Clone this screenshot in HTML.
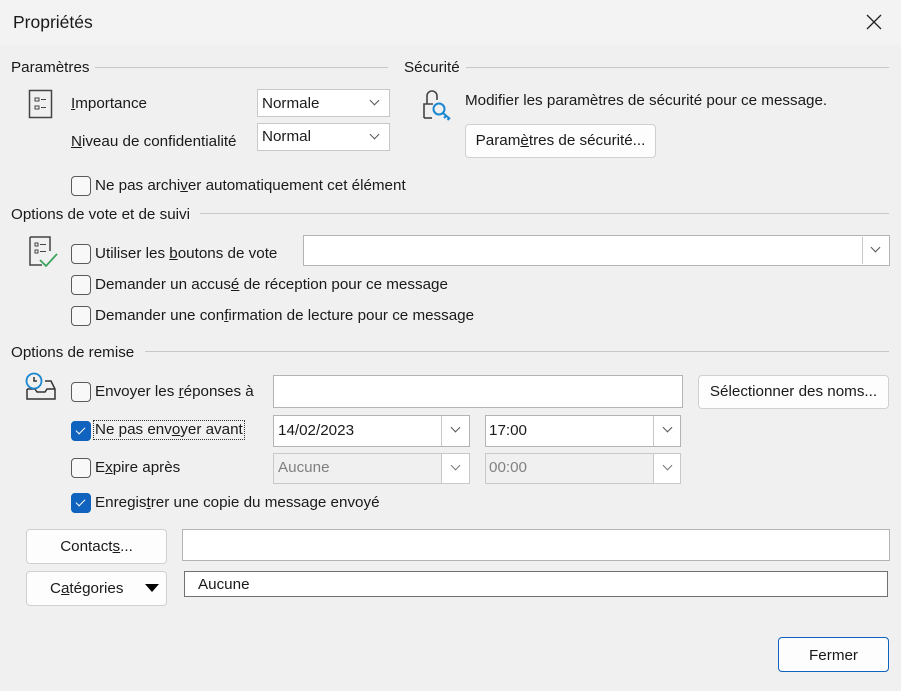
<!DOCTYPE html>
<html><head><meta charset="utf-8"><style>
*{box-sizing:border-box;margin:0;padding:0}
body{width:901px;height:691px;background:#f0f0f0;font-family:"Liberation Sans",sans-serif;font-size:15.2px;color:#1a1a1a;position:relative;overflow:hidden}
.a{position:absolute;white-space:nowrap}
.t{position:absolute;white-space:nowrap;line-height:18px}
.ln{position:absolute;height:1px;background:#c8c8c8}
.cb{position:absolute;width:20px;height:20px;border:1px solid #5a5a5a;border-radius:4px;background:#f8f8f8}
.cb.on{background:#0f62be;border-color:#0f62be}
.cb.on:after{content:"";position:absolute;left:6px;top:3px;width:4px;height:8px;border:solid #fff;border-width:0 1.5px 1.5px 0;transform:rotate(45deg)}
.box{position:absolute;background:#fff;border:1px solid #b4b4b4}
.btn{position:absolute;background:#fdfdfd;border:1px solid #d0d0d0;border-radius:4px;text-align:center}
.chev{position:absolute;width:7px;height:7px;border:solid #555;border-width:0 1px 1px 0;transform:rotate(45deg)}
.dd{position:absolute;background:#fff;border:1px solid #c8c8c8}
u{text-decoration:underline}
</style></head><body>
<div class="a" style="left:0;top:0;width:901px;height:45px;background:#f3f3f3"></div>
<div class="t" style="left:13px;top:12px;font-size:17.5px;line-height:20px">Propriétés</div>
<svg class="a" style="left:866px;top:14px" width="16" height="16"><path d="M1 1L15 15M15 1L1 15" stroke="#222" stroke-width="1.3"/></svg>

<div class="t" style="left:11px;top:59px">Paramètres</div>
<div class="ln" style="left:95px;top:67px;width:293px"></div>
<div class="t" style="left:404px;top:59px">Sécurité</div>
<div class="ln" style="left:466px;top:67px;width:423px"></div>

<svg class="a" style="left:28px;top:89px" width="26" height="30"><rect x="1.5" y="1.5" width="22" height="27" fill="none" stroke="#444" stroke-width="1.5"/><rect x="7" y="9" width="4" height="3" fill="none" stroke="#444"/><rect x="7" y="17" width="4" height="3" fill="none" stroke="#444"/><path d="M13 10.5h5M13 18.5h5" stroke="#444"/></svg>
<div class="t" style="left:71px;top:95px"><u>I</u>mportance</div>
<div class="t" style="left:71px;top:133px"><u>N</u>iveau de confidentialité</div>
<div class="dd" style="left:257px;top:89px;width:133px;height:28px"><span class="t" style="left:4px;top:5px">Normale</span><span class="chev" style="left:113px;top:7px"></span></div>
<div class="dd" style="left:257px;top:123px;width:133px;height:28px"><span class="t" style="left:4px;top:4px">Normal</span><span class="chev" style="left:113px;top:7px"></span></div>

<svg class="a" style="left:421px;top:88px" width="32" height="34"><path d="M3 30V16h9M6 16V8a5 5 0 0 1 10 0v4" fill="none" stroke="#444" stroke-width="1.6"/><path d="M3 30h8" stroke="#444" stroke-width="1.6"/><circle cx="18" cy="21" r="5.5" fill="none" stroke="#1a86d0" stroke-width="2"/><path d="M22 25l7 6M25 28l-2 2M28 30.5l-1.5 1.5" stroke="#1a86d0" stroke-width="2" fill="none"/></svg>
<div class="t" style="left:465px;top:92px">Modifier les paramètres de sécurité pour ce message.</div>
<div class="btn" style="left:465px;top:124px;width:191px;height:34px;line-height:32px">Param<u>è</u>tres de sécurité...</div>

<div class="cb" style="left:71px;top:176px"></div>
<div class="t" style="left:95px;top:177px">Ne pas archi<u>v</u>er automatiquement cet élément</div>

<div class="t" style="left:11px;top:206px">Options de vote et de suivi</div>
<div class="ln" style="left:200px;top:213px;width:689px"></div>
<svg class="a" style="left:28px;top:235px" width="32" height="34"><path d="M2 2h20v14M2 2v28h12" fill="none" stroke="#444" stroke-width="1.5"/><rect x="7" y="8" width="3" height="3" fill="none" stroke="#444"/><rect x="7" y="15" width="3" height="3" fill="none" stroke="#444"/><path d="M12 9.5h6M12 16.5h6" stroke="#444"/><path d="M12 25l6 6 11-12" fill="none" stroke="#3aa35a" stroke-width="1.8"/></svg>
<div class="cb" style="left:71px;top:244px"></div>
<div class="t" style="left:95px;top:245px">Utiliser les <u>b</u>outons de vote</div>
<div class="box" style="left:303px;top:235px;width:587px;height:31px"></div>
<div class="a" style="left:862px;top:237px;width:26px;height:27px;border-left:1px solid #c8c8c8;background:#fff"><span class="chev" style="left:9px;top:7px"></span></div>
<div class="cb" style="left:71px;top:275px"></div>
<div class="t" style="left:95px;top:276px">Demander un accus<u>é</u> de réception pour ce message</div>
<div class="cb" style="left:71px;top:306px"></div>
<div class="t" style="left:95px;top:307px">Demander une con<u>f</u>irmation de lecture pour ce message</div>

<div class="t" style="left:11px;top:344px">Options de remise</div>
<div class="ln" style="left:145px;top:351px;width:744px"></div>
<svg class="a" style="left:24px;top:372px" width="34" height="30"><path d="M3 17v10h28V17l-4-8h-6M3 17h8l2 3h8l2-3h8" fill="none" stroke="#333" stroke-width="1.5"/><circle cx="10" cy="9" r="7.5" fill="#f0f0f0" stroke="#1a86d0" stroke-width="1.8"/><path d="M10 5v4h3" fill="none" stroke="#333" stroke-width="1.5"/></svg>
<div class="cb" style="left:71px;top:382px"></div>
<div class="t" style="left:95px;top:383px">Envoyer les <u>r</u>éponses à</div>
<div class="box" style="left:273px;top:375px;width:410px;height:33px"></div>
<div class="btn" style="left:698px;top:375px;width:191px;height:34px;line-height:32px">Sélectionner des noms...</div>

<div class="cb on" style="left:71px;top:421px"></div>
<div class="t" style="left:94px;top:421px;outline:1px dotted #333;padding:0 1px">Ne pas env<u>o</u>yer avant</div>
<div class="box" style="left:273px;top:415px;width:197px;height:32px"><span class="t" style="left:4px;top:6px">14/02/2023</span></div>
<div class="a" style="left:441px;top:416px;width:28px;height:30px;border-left:1px solid #c8c8c8;background:#fff"><span class="chev" style="left:10px;top:8px"></span></div>
<div class="box" style="left:485px;top:415px;width:196px;height:32px"><span class="t" style="left:3px;top:6px">17:00</span></div>
<div class="a" style="left:653px;top:416px;width:27px;height:30px;border-left:1px solid #c8c8c8;background:#fff"><span class="chev" style="left:10px;top:8px"></span></div>

<div class="cb" style="left:71px;top:458px"></div>
<div class="t" style="left:95px;top:459px">E<u>x</u>pire après</div>
<div class="box" style="left:273px;top:453px;width:197px;height:31px;background:#f0f0f0;border-color:#c8c8c8"><span class="t" style="left:4px;top:5px;color:#808080">Aucune</span></div>
<div class="a" style="left:441px;top:454px;width:28px;height:29px;border-left:1px solid #c8c8c8;background:#fff"><span class="chev" style="left:10px;top:8px;border-color:#777"></span></div>
<div class="box" style="left:485px;top:453px;width:196px;height:31px;background:#f0f0f0;border-color:#c8c8c8"><span class="t" style="left:3px;top:5px;color:#808080">00:00</span></div>
<div class="a" style="left:653px;top:454px;width:27px;height:29px;border-left:1px solid #c8c8c8;background:#fff"><span class="chev" style="left:10px;top:8px;border-color:#777"></span></div>

<div class="cb on" style="left:71px;top:493px"></div>
<div class="t" style="left:95px;top:494px">Enregis<u>t</u>rer une copie du message envoyé</div>

<div class="btn" style="left:26px;top:529px;width:141px;height:35px;line-height:33px">Contact<u>s</u>...</div>
<div class="box" style="left:182px;top:529px;width:708px;height:32px"></div>
<div class="btn" style="left:26px;top:571px;width:141px;height:35px;line-height:33px;text-align:left;padding-left:23px">C<u>a</u>tégories</div>
<svg class="a" style="left:145px;top:584px" width="14" height="8"><path d="M0 0h14L7 8z" fill="#000"/></svg>
<div class="box" style="left:184px;top:571px;width:704px;height:26px;border-color:#707070"><span class="t" style="left:13px;top:4px">Aucune</span></div>

<div class="btn" style="left:778px;top:637px;width:111px;height:35px;line-height:35px;border-color:#0f62be">Fermer</div>
</body></html>
